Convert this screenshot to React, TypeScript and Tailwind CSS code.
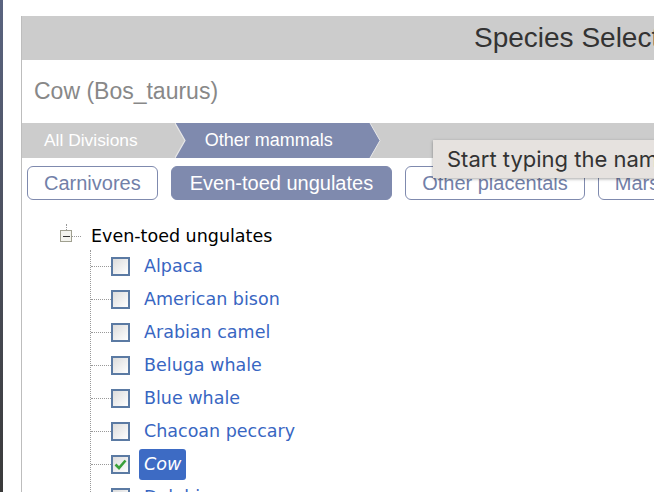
import React from "react";

const SPECIES = [
  "Alpaca",
  "American bison",
  "Arabian camel",
  "Beluga whale",
  "Blue whale",
  "Chacoan peccary",
  "Cow",
  "Dolphin",
];

const SELECTED = "Cow";

function Checkbox({ checked }: { checked: boolean }) {
  return (
    <span className="flex h-[19px] w-[19px] shrink-0 items-center justify-center border-2 border-[#5b7aa3] bg-gradient-to-br from-[#dcdcdc] to-[#ffffff]">
      {checked && (
        <svg width="13" height="11" viewBox="0 0 13 11">
          <path d="M1.5 5.5 L5 9 L11.5 1.5" fill="none" stroke="#3aa13a" strokeWidth="2.6" />
        </svg>
      )}
    </span>
  );
}

function SpeciesRow({ name }: { name: string }) {
  const isSelected = name === SELECTED;
  return (
    <div className="flex h-[33px] shrink-0 items-center">
      {/* dotted connector */}
      <span className="w-[20px] border-t border-dotted border-[#999]" />
      <Checkbox checked={isSelected} />
      {isSelected ? (
        <span className="ml-[9px] rounded-[3px] bg-[#3d6bc4] px-[5px] py-[2px] italic text-white">
          {name}
        </span>
      ) : (
        <span className="ml-[14px] text-[#3866c2]">{name}</span>
      )}
    </div>
  );
}

function Breadcrumbs() {
  return (
    <div className="relative flex h-[35px] shrink-0 items-center bg-[#cccccc] text-[17.4px] text-white">
      <span className="pl-[22px]">All Divisions</span>
      <svg
        className="absolute left-[153px] top-0"
        width="206"
        height="35"
        viewBox="0 0 206 35"
      >
        <polygon points="0,0 195,0 205,17.5 195,35 0,35 10,17.5" fill="#7f8aae" />
        <polyline points="0,0 10,17.5 0,35" fill="none" stroke="#e8e8e8" strokeWidth="1.2" />
        <polyline points="195,0 205,17.5 195,35" fill="none" stroke="#e8e8e8" strokeWidth="1" />
      </svg>
      <span className="relative ml-[67px] text-[18px]">Other mammals</span>
    </div>
  );
}

function Pill({ label, active }: { label: string; active?: boolean }) {
  return (
    <span
      className={
        active
          ? "flex h-[34px] shrink-0 items-center rounded-[6px] border border-[#7f8aae] bg-[#7f8aae] px-[18px] text-white"
          : "flex h-[34px] shrink-0 items-center rounded-[6px] border border-[#7f8aae] bg-white px-[16px] text-[#7280a8]"
      }
    >
      {label}
    </span>
  );
}

export default function App() {
  return (
    <div className="relative flex h-[492px] w-[654px] overflow-hidden bg-white font-['Liberation_Sans',Arial,sans-serif]">
      {/* window behind */}
      <div className="w-[3px] shrink-0 bg-gradient-to-b from-[#5a6480] via-[#4b4f5c] to-[#3a3a3a]" />
      <div className="w-[18px] shrink-0 bg-white" />

      {/* selector panel */}
      <div className="mt-[16px] flex min-w-0 flex-1 flex-col border-l border-[#bdbdbd]">
        <div className="flex h-[44px] shrink-0 items-center overflow-hidden whitespace-nowrap bg-[#cccccc] pl-[452px] text-[28px] text-[#333]">
          Species Selector
        </div>
        <div className="flex h-[63px] shrink-0 items-center pl-[12px] text-[23px] text-[#888]">
          Cow (Bos_taurus)
        </div>
        <Breadcrumbs />
        <div className="mt-[8px] flex shrink-0 gap-[13px] whitespace-nowrap pl-[5px] text-[20px]">
          <Pill label="Carnivores" />
          <Pill label="Even-toed ungulates" active />
          <Pill label="Other placentals" />
          <Pill label="Marsupials" />
        </div>

        {/* tree */}
        <div className="mt-[22px] shrink-0 pl-[38px] font-['DejaVu_Sans',Verdana,sans-serif] text-[17.5px]">
          <div className="flex h-[28px] items-center">
            <span className="relative flex h-[12px] w-[12px] items-center justify-center border border-[#a0a090] bg-[#f4f4ee]">
              <span className="h-[1px] w-[7px] bg-[#333]" />
              <span className="absolute -top-[7px] left-[5px] h-[6px] border-l border-dotted border-[#999]" />
            </span>
            <span className="w-[9px] border-t border-dotted border-[#999]" />
            <span className="ml-[10px] text-black">Even-toed ungulates</span>
          </div>
          <div className="ml-[30px] flex flex-col border-l border-dotted border-[#999]">
            {SPECIES.map((s) => (
              <SpeciesRow key={s} name={s} />
            ))}
          </div>
        </div>
      </div>

      {/* tooltip */}
      <div className="absolute left-[433px] top-[140px] flex h-[38px] w-[240px] items-center whitespace-nowrap bg-[#e6e2df] pl-[14px] font-['Inter',sans-serif] text-[22px] text-[#333] shadow-[0_1px_3px_rgba(0,0,0,0.35)]">
        Start typing the name
      </div>
    </div>
  );
}
